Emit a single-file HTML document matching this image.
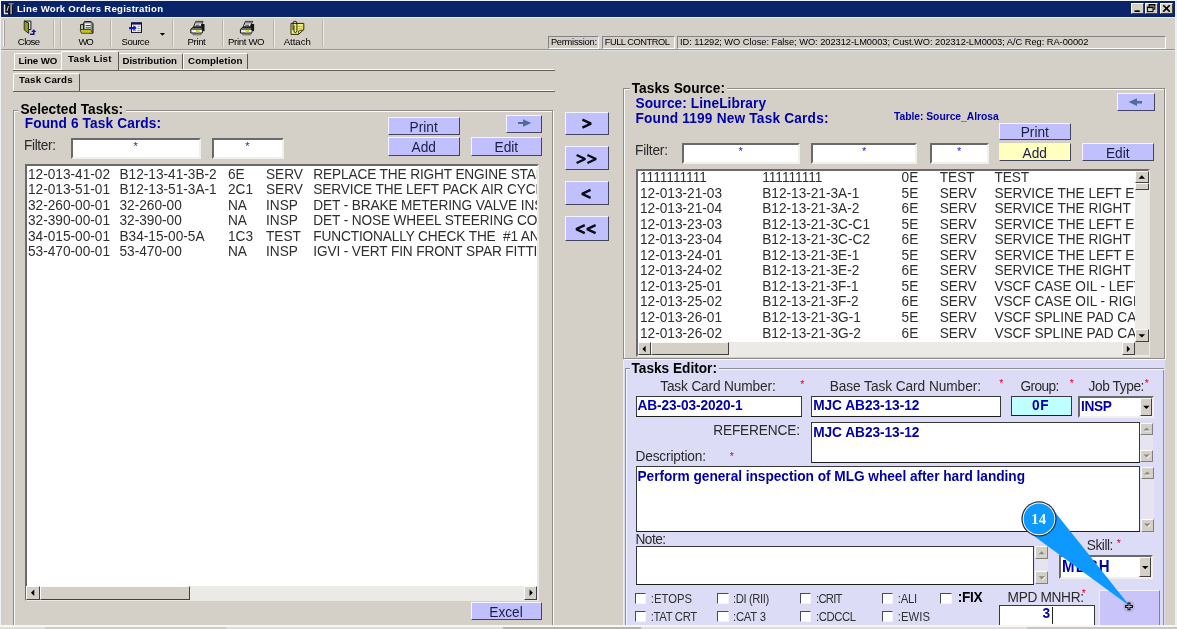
<!DOCTYPE html>
<html>
<head>
<meta charset="utf-8">
<title>Line Work Orders Registration</title>
<style>
html,body{margin:0;padding:0;}
body{width:1177px;height:629px;overflow:hidden;background:#d4d0c8;position:relative;font-family:"Liberation Sans",sans-serif;font-size:13.7px;color:#111;}
div,svg{position:absolute;}
#app{left:0;top:0;width:1177px;height:629px;overflow:hidden;will-change:transform;}
.t{white-space:pre;line-height:1;}
.btn{background:#c0c0ff;box-sizing:border-box;border-style:solid;border-width:1px 1.6px 1.6px 1px;border-color:#f4f4ff #44445e #44445e #f4f4ff;text-align:center;white-space:nowrap;color:#1c1c44;line-height:1;}
.inp{background:#fff;box-sizing:border-box;border:2px solid;border-color:#6a6a6a #f2f0ea #f2f0ea #6a6a6a;}
.inp2{background:#fff;box-sizing:border-box;border:1px solid #383838;border-bottom:1.5px solid #1c1c1c;}
.list{background:#fff;box-sizing:border-box;border:2px solid;border-color:#6a6a6a #ece9e2 #ece9e2 #6a6a6a;overflow:hidden;}
.row{white-space:pre;line-height:1;font-size:13.67px;color:#2e2e2e;transform:scaleY(1.09);transform-origin:0 11px;}
.sb{background:#eceae6;}
.sbtn{background:#d4d0c8;box-sizing:border-box;border:1px solid;border-color:#fbfbfb #404040 #404040 #fbfbfb;}
.sbtn2{background:#d4d0c8;box-sizing:border-box;border:1px solid;border-color:#fbfbfb #808080 #808080 #fbfbfb;}
.sunk{box-sizing:border-box;border:1px solid;border-color:#848284 #fcfcfc #fcfcfc #848284;}
.cb{background:#fff;box-sizing:border-box;border:1.5px solid;border-color:#4a4a56 #f4f4fa #f4f4fa #4a4a56;}
.star{color:#e00030;font-size:10.5px;font-weight:normal;line-height:1;}
.fstar{color:#1c1cb0;font-size:11px;font-weight:normal;line-height:1;}
.vsep{width:1px;background:#b6b3ac;box-shadow:1px 0 0 #eceae5;}
.tab{box-sizing:border-box;background:#d4d0c8;border-style:solid;border-width:1px 1.5px 0 1px;border-color:#fcfcfc #5c5852 #fcfcfc #fcfcfc;border-radius:2px 2px 0 0;}
</style>
</head>
<body>
<div id="app">
<div class="" style="left:0.0px;top:0.0px;width:1177.0px;height:1.0px;background:#eef1f6;"></div>
<div class="" style="left:0.0px;top:0.0px;width:1.0px;height:629.0px;background:#eef1f6;"></div>
<div class="" style="left:1175.0px;top:0.0px;width:2.0px;height:629.0px;background:#ecf0f8;"></div>
<div class="" style="left:1.0px;top:1.0px;width:1174.0px;height:15.7px;background:#0a246a;"></div>
<div class="" style="left:1.0px;top:16.7px;width:1174.0px;height:1.0px;background:#efeeea;"></div>
<svg style="left:2px;top:2px" width="13" height="14" viewBox="0 0 13 14">
<rect x="0.5" y="1" width="10.6" height="11.6" fill="#0b1030"/>
<path d="M2.5 2.5 V11.5 H6" stroke="#e8e8f0" stroke-width="1.4" fill="none"/>
<path d="M6.5 4 L5 9" stroke="#d8d8e8" stroke-width="1" fill="none"/>
<rect x="8.3" y="2.2" width="1.6" height="10" fill="#b8ac78"/>
<rect x="6.5" y="1.2" width="5" height="1.2" fill="#9090a0"/>
</svg>
<div class="" style="left:1131.0px;top:3.0px;width:12.7px;height:11.2px;background:#d4d0c8;box-sizing:border-box;border:1px solid;border-color:#fff #404040 #404040 #fff;"></div>
<div class="" style="left:1145.0px;top:3.0px;width:12.6px;height:11.2px;background:#d4d0c8;box-sizing:border-box;border:1px solid;border-color:#fff #404040 #404040 #fff;"></div>
<div class="" style="left:1160.0px;top:3.0px;width:13.0px;height:11.2px;background:#d4d0c8;box-sizing:border-box;border:1px solid;border-color:#fff #404040 #404040 #fff;"></div>
<svg style="left:1125px;top:0" width="52" height="17" viewBox="0 0 52 17">
<rect x="9.5" y="10.3" width="5.2" height="1.7" fill="#000"/>
<rect x="24.2" y="4.6" width="5.6" height="4.6" fill="none" stroke="#000" stroke-width="1"/><rect x="23.7" y="4.1" width="6.6" height="1.4" fill="#000"/>
<rect x="22.4" y="7.2" width="5.6" height="4.4" fill="#d4d0c8" stroke="#000" stroke-width="1"/><rect x="21.9" y="6.7" width="6.6" height="1.4" fill="#000"/>
<path d="M38.3 5.2 L44.7 11.6 M44.7 5.2 L38.3 11.6" stroke="#000" stroke-width="1.6"/>
</svg>
<div class="" style="left:3.3px;top:19.5px;width:1.0px;height:27.5px;background:#f2f1ed;box-shadow:1px 0 0 #a6a39c;"></div>
<div class="vsep" style="left:53.0px;top:19.5px;width:1.0px;height:27.5px;"></div>
<div class="vsep" style="left:60.0px;top:19.5px;width:1.0px;height:27.5px;"></div>
<div class="vsep" style="left:110.0px;top:19.5px;width:1.0px;height:27.5px;"></div>
<div class="vsep" style="left:172.0px;top:19.5px;width:1.0px;height:27.5px;"></div>
<div class="vsep" style="left:221.6px;top:19.5px;width:1.0px;height:27.5px;"></div>
<div class="vsep" style="left:272.6px;top:19.5px;width:1.0px;height:27.5px;"></div>
<div class="vsep" style="left:322.0px;top:19.5px;width:1.0px;height:27.5px;"></div>
<div class="" style="left:1.0px;top:48.6px;width:1174.0px;height:1.0px;background:#98958f;"></div>
<div class="" style="left:1.0px;top:49.6px;width:1174.0px;height:0.8px;background:#e2e0da;"></div>
<div class="sunk" style="left:547.6px;top:36.2px;width:51.0px;height:12.4px;"></div>
<div class="sunk" style="left:602.0px;top:36.2px;width:73.0px;height:12.4px;"></div>
<div class="sunk" style="left:677.3px;top:36.2px;width:488.3px;height:12.4px;"></div>
<svg style="left:0;top:17px" width="330" height="20" viewBox="0 17 330 20">
<!-- close: door -->
<path d="M24.2 21.1 H30.9 V29.6 H28.6 V23 Z" fill="#fdfdfd" stroke="#111" stroke-width="1" stroke-linejoin="miter"/>
<path d="M24.2 21.2 L28.6 23 V33.4 L24.2 29.8 Z" fill="#8c9a24" stroke="#262a08" stroke-width="0.9"/>
<path d="M30 34.2 H33.8 V31.4" fill="none" stroke="#14148c" stroke-width="1.5"/>
<path d="M31.2 32 L33.8 29.2 L36.4 32 Z" fill="#14148c"/>
<!-- WO: doc + folder -->
<path d="M83.4 29.6 V23.4 L84.4 21.6 H91.2 L93 23.7 V33 H90 Z" fill="#8a8a8a" stroke="#141414" stroke-width="1"/>
<rect x="85" y="23.4" width="5.6" height="5.4" fill="#fcfcfc"/>
<path d="M85.6 25.6 H90.6 M85.6 27.8 H90.6" stroke="#1c1c1c" stroke-width="0.9"/>
<path d="M80.6 29.4 V24.6 H83" fill="none" stroke="#141414" stroke-width="1"/>
<path d="M80.2 29.6 H90.6 L92.8 33.2 H81.4 Z" fill="#dede28" stroke="#2c2c08" stroke-width="0.9"/>
<path d="M81.6 31.4 H91" stroke="#a8a818" stroke-width="1.1" stroke-dasharray="1 0.8"/>
<!-- Source: table w/ arrow -->
<rect x="131.5" y="23" width="10" height="9.4" fill="#fbfbff" stroke="#0c0c2c" stroke-width="1"/>
<rect x="131" y="22.4" width="11" height="2.2" fill="#10104c"/>
<path d="M137.6 26.2 H140.4 M137.6 28.4 H140.4 M137.6 30.4 H140.4 M133.4 26.2 H136 M133.4 30.4 H136" stroke="#55555f" stroke-width="0.9" stroke-dasharray="1.2 0.6"/>
<path d="M129.1 27.1 H133.4 V25.6 L136.9 28.1 L133.4 30.7 V29.2 H129.1 Z" fill="#1212dc"/>
<!-- Print -->
<g id="prn">
<path d="M193.6 26.8 L195.8 21.4 H203 L200.6 26.8 Z" fill="#fdfdfd" stroke="#141414" stroke-width="1"/>
<path d="M195.8 21.6 H202.8 L202 23.5 H195 Z" fill="#7a7a7a"/>
<path d="M195.6 25.2 H199.6" stroke="#222" stroke-width="1"/>
<rect x="201.2" y="24" width="3.3" height="7.2" fill="#141414"/>
<path d="M190.8 33 V29.4 L192.6 27.4 H202.2 V33 Z" fill="#6a6a6a" stroke="#141414" stroke-width="1"/>
<rect x="191.5" y="30.1" width="10.4" height="2.3" fill="#f4f4f4"/>
<rect x="196" y="30.1" width="3.6" height="2.3" fill="#c4e010"/>
<path d="M192.4 33.7 H201.6 L200.8 34.9 H193.2 Z" fill="#b4b4c4" stroke="#3a3a4a" stroke-width="0.6"/>
</g>
<use href="#prn" x="49.6" y="0"/>
<!-- Attach -->
<path d="M291 23.4 H303.8 V29.6 L298.6 34.4 H291 Z" fill="#eeee70" stroke="#2a2a0c" stroke-width="1"/>
<path d="M297.5 26.5 H302.5 M297.5 28.7 H302" stroke="#b8b840" stroke-width="0.9"/>
<path d="M303.6 29.8 L298.6 31 L298.6 34.2" fill="none" stroke="#2a2a0c" stroke-width="0.8"/>
<path d="M293 30 V23 Q293 21.2 294.9 21.2 Q296.9 21.2 296.9 23 V30.6 Q296.9 32.6 295.4 32.6 Q294 32.6 294 30.8 V25.4" fill="none" stroke="#161616" stroke-width="0.9"/>
</svg>
<div class="" style="left:13.0px;top:68.8px;width:541.0px;height:1.0px;background:#f8f8f6;"></div>
<div class="" style="left:13.0px;top:69.8px;width:541.5px;height:1.2px;background:#64605a;"></div>
<div class="" style="left:13.0px;top:90.2px;width:541.0px;height:1.0px;background:#f8f8f6;"></div>
<div class="" style="left:13.0px;top:91.2px;width:541.5px;height:1.2px;background:#64605a;"></div>
<div class="tab" style="left:14.0px;top:53.0px;width:48.0px;height:16.0px;"></div>
<div class="tab" style="left:118.0px;top:53.0px;width:65.0px;height:16.0px;"></div>
<div class="tab" style="left:183.0px;top:53.0px;width:65.0px;height:16.0px;"></div>
<div class="tab" style="left:61.0px;top:51.0px;width:58.0px;height:19.4px;"></div>
<div class="tab" style="left:12.7px;top:72.6px;width:67.5px;height:18.6px;"></div>
<div class="" style="left:13.7px;top:111.0px;width:540.2px;height:550.0px;box-sizing:border-box;border:1px solid #fbfbfb;"></div><div class="" style="left:12.7px;top:110.0px;width:540.2px;height:550.0px;box-sizing:border-box;border:1px solid #8e8c88;"></div>
<div class="" style="left:18.0px;top:104.0px;width:107.5px;height:12.0px;background:#d4d0c8;"></div>
<div class="inp" style="left:71.4px;top:137.8px;width:129.6px;height:20.9px;"></div>
<div class="inp" style="left:212.0px;top:137.8px;width:72.0px;height:20.9px;"></div>
<div class="btn" style="left:388.0px;top:116.9px;width:72.0px;height:17.9px;"></div>
<div class="btn" style="left:388.0px;top:137.0px;width:72.0px;height:18.5px;"></div>
<div class="btn" style="left:470.8px;top:137.0px;width:71.5px;height:18.5px;"></div>
<div class="btn" style="left:505.9px;top:115.2px;width:36.1px;height:18.2px;"></div>
<div class="list" style="left:24.5px;top:164.3px;width:514.0px;height:437.2px;"><div class="row" style="left:1.5px;top:1.7px;">12-013-41-02</div><div class="row" style="left:93.0px;top:1.7px;">B12-13-41-3B-2</div><div class="row" style="left:201.5px;top:1.7px;">6E</div><div class="row" style="left:239.5px;top:1.7px;">SERV</div><div class="row" style="left:286.8px;top:1.7px;letter-spacing:-0.13px;">REPLACE THE RIGHT ENGINE STARTER</div><div class="row" style="left:1.5px;top:16.7px;">12-013-51-01</div><div class="row" style="left:93.0px;top:16.7px;">B12-13-51-3A-1</div><div class="row" style="left:201.5px;top:16.7px;">2C1</div><div class="row" style="left:239.5px;top:16.7px;">SERV</div><div class="row" style="left:286.8px;top:16.7px;letter-spacing:-0.13px;">SERVICE THE LEFT PACK AIR CYCLE</div><div class="row" style="left:1.5px;top:32.7px;">32-260-00-01</div><div class="row" style="left:93.0px;top:32.7px;">32-260-00</div><div class="row" style="left:201.5px;top:32.7px;">NA</div><div class="row" style="left:239.5px;top:32.7px;">INSP</div><div class="row" style="left:286.8px;top:32.7px;letter-spacing:-0.13px;">DET - BRAKE METERING VALVE INSP</div><div class="row" style="left:1.5px;top:47.7px;">32-390-00-01</div><div class="row" style="left:93.0px;top:47.7px;">32-390-00</div><div class="row" style="left:201.5px;top:47.7px;">NA</div><div class="row" style="left:239.5px;top:47.7px;">INSP</div><div class="row" style="left:286.8px;top:47.7px;letter-spacing:-0.13px;">DET - NOSE WHEEL STEERING COLLAR</div><div class="row" style="left:1.5px;top:63.7px;">34-015-00-01</div><div class="row" style="left:93.0px;top:63.7px;">B34-15-00-5A</div><div class="row" style="left:201.5px;top:63.7px;">1C3</div><div class="row" style="left:239.5px;top:63.7px;">TEST</div><div class="row" style="left:286.8px;top:63.7px;letter-spacing:-0.13px;">FUNCTIONALLY CHECK THE  #1 AND</div><div class="row" style="left:1.5px;top:78.7px;">53-470-00-01</div><div class="row" style="left:93.0px;top:78.7px;">53-470-00</div><div class="row" style="left:201.5px;top:78.7px;">NA</div><div class="row" style="left:239.5px;top:78.7px;">INSP</div><div class="row" style="left:286.8px;top:78.7px;letter-spacing:-0.13px;">IGVI - VERT FIN FRONT SPAR FITTING</div><div class="sb" style="left:0.0px;top:419.9px;width:510.0px;height:14.3px;"></div></div>
<div class="sbtn" style="left:26.3px;top:586.0px;width:13.3px;height:13.6px;"></div>
<div class="sbtn" style="left:39.6px;top:586.0px;width:150.1px;height:13.6px;"></div>
<div class="sbtn" style="left:524.2px;top:586.0px;width:13.2px;height:13.6px;"></div>
<div class="btn" style="left:470.8px;top:602.0px;width:71.1px;height:18.2px;"></div>
<div class="fstar" style="left:133.5px;top:140.5px">*</div>
<div class="fstar" style="left:245.3px;top:140.5px">*</div>
<div class="btn" style="left:565.3px;top:111.8px;width:43.5px;height:23.0px;"></div>
<div class="btn" style="left:565.3px;top:146.3px;width:43.5px;height:23.7px;"></div>
<div class="btn" style="left:565.3px;top:181.3px;width:43.5px;height:23.7px;"></div>
<div class="btn" style="left:565.3px;top:216.4px;width:43.5px;height:24.4px;"></div>
<svg style="left:0;top:0" width="1177" height="629"><path d="M582.4 119.6 L591.0 123.6 L582.4 127.6 M576.6 155.0 L585.2 159.0 L576.6 163.0 M587.4 155.0 L596.0 159.0 L587.4 163.0 M590.6 189.8 L582.0 193.8 L590.6 197.8 M584.8 225.2 L576.2 229.2 L584.8 233.2 M595.6 225.2 L587.0 229.2 L595.6 233.2" fill="none" stroke="#0c0c14" stroke-width="2.4" stroke-linejoin="bevel"/></svg>
<div class="" style="left:624.3px;top:89.3px;width:541.5px;height:270.7px;box-sizing:border-box;border:1px solid #fbfbfb;"></div><div class="" style="left:623.3px;top:88.3px;width:541.5px;height:270.7px;box-sizing:border-box;border:1px solid #8e8c88;"></div>
<div class="" style="left:629.5px;top:82.0px;width:97.5px;height:13.0px;background:#d4d0c8;"></div>
<div class="inp" style="left:682.0px;top:143.0px;width:118.0px;height:21.2px;"></div>
<div class="inp" style="left:811.4px;top:143.0px;width:106.0px;height:21.2px;"></div>
<div class="inp" style="left:929.6px;top:143.0px;width:59.7px;height:21.2px;"></div>
<div class="fstar" style="left:738.5px;top:145.8px">*</div>
<div class="fstar" style="left:861.9px;top:145.8px">*</div>
<div class="fstar" style="left:957.0px;top:145.8px">*</div>
<div class="btn" style="left:1117.3px;top:93.3px;width:37.7px;height:18.2px;"></div>
<div class="btn" style="left:999.0px;top:122.5px;width:72.2px;height:17.3px;"></div>
<div class="btn" style="left:999.0px;top:142.9px;width:72.2px;height:17.8px;background:#ffffc0;"></div>
<div class="btn" style="left:1082.0px;top:142.9px;width:72.0px;height:17.8px;"></div>
<div class="list" style="left:636.0px;top:169.3px;width:513.5px;height:187.3px;"><div class="" style="left:0.0px;top:0.0px;width:497.0px;height:171.1px;overflow:hidden;"><div class="row" style="left:2.0px;top:-0.3px;">1111111111</div><div class="row" style="left:124.2px;top:-0.3px;">111111111</div><div class="row" style="left:263.6px;top:-0.3px;">0E</div><div class="row" style="left:301.7px;top:-0.3px;">TEST</div><div class="row" style="left:356.4px;top:-0.3px;letter-spacing:-0.03px;">TEST</div><div class="row" style="left:2.0px;top:15.7px;">12-013-21-03</div><div class="row" style="left:124.2px;top:15.7px;">B12-13-21-3A-1</div><div class="row" style="left:263.6px;top:15.7px;">5E</div><div class="row" style="left:301.7px;top:15.7px;">SERV</div><div class="row" style="left:356.4px;top:15.7px;letter-spacing:-0.03px;">SERVICE THE LEFT ENGINE</div><div class="row" style="left:2.0px;top:30.7px;">12-013-21-04</div><div class="row" style="left:124.2px;top:30.7px;">B12-13-21-3A-2</div><div class="row" style="left:263.6px;top:30.7px;">6E</div><div class="row" style="left:301.7px;top:30.7px;">SERV</div><div class="row" style="left:356.4px;top:30.7px;letter-spacing:-0.03px;">SERVICE THE RIGHT ENGINE</div><div class="row" style="left:2.0px;top:46.7px;">12-013-23-03</div><div class="row" style="left:124.2px;top:46.7px;">B12-13-21-3C-C1</div><div class="row" style="left:263.6px;top:46.7px;">5E</div><div class="row" style="left:301.7px;top:46.7px;">SERV</div><div class="row" style="left:356.4px;top:46.7px;letter-spacing:-0.03px;">SERVICE THE LEFT ENGINE</div><div class="row" style="left:2.0px;top:61.7px;">12-013-23-04</div><div class="row" style="left:124.2px;top:61.7px;">B12-13-21-3C-C2</div><div class="row" style="left:263.6px;top:61.7px;">6E</div><div class="row" style="left:301.7px;top:61.7px;">SERV</div><div class="row" style="left:356.4px;top:61.7px;letter-spacing:-0.03px;">SERVICE THE RIGHT ENGINE</div><div class="row" style="left:2.0px;top:77.7px;">12-013-24-01</div><div class="row" style="left:124.2px;top:77.7px;">B12-13-21-3E-1</div><div class="row" style="left:263.6px;top:77.7px;">5E</div><div class="row" style="left:301.7px;top:77.7px;">SERV</div><div class="row" style="left:356.4px;top:77.7px;letter-spacing:-0.03px;">SERVICE THE LEFT ENGINE</div><div class="row" style="left:2.0px;top:92.7px;">12-013-24-02</div><div class="row" style="left:124.2px;top:92.7px;">B12-13-21-3E-2</div><div class="row" style="left:263.6px;top:92.7px;">6E</div><div class="row" style="left:301.7px;top:92.7px;">SERV</div><div class="row" style="left:356.4px;top:92.7px;letter-spacing:-0.03px;">SERVICE THE RIGHT ENGINE</div><div class="row" style="left:2.0px;top:108.7px;">12-013-25-01</div><div class="row" style="left:124.2px;top:108.7px;">B12-13-21-3F-1</div><div class="row" style="left:263.6px;top:108.7px;">5E</div><div class="row" style="left:301.7px;top:108.7px;">SERV</div><div class="row" style="left:356.4px;top:108.7px;letter-spacing:-0.03px;">VSCF CASE OIL - LEFT</div><div class="row" style="left:2.0px;top:123.7px;">12-013-25-02</div><div class="row" style="left:124.2px;top:123.7px;">B12-13-21-3F-2</div><div class="row" style="left:263.6px;top:123.7px;">6E</div><div class="row" style="left:301.7px;top:123.7px;">SERV</div><div class="row" style="left:356.4px;top:123.7px;letter-spacing:-0.03px;">VSCF CASE OIL - RIGHT</div><div class="row" style="left:2.0px;top:139.7px;">12-013-26-01</div><div class="row" style="left:124.2px;top:139.7px;">B12-13-21-3G-1</div><div class="row" style="left:263.6px;top:139.7px;">5E</div><div class="row" style="left:301.7px;top:139.7px;">SERV</div><div class="row" style="left:356.4px;top:139.7px;letter-spacing:-0.03px;">VSCF SPLINE PAD CAP</div><div class="row" style="left:2.0px;top:155.7px;">12-013-26-02</div><div class="row" style="left:124.2px;top:155.7px;">B12-13-21-3G-2</div><div class="row" style="left:263.6px;top:155.7px;">6E</div><div class="row" style="left:301.7px;top:155.7px;">SERV</div><div class="row" style="left:356.4px;top:155.7px;letter-spacing:-0.03px;">VSCF SPLINE PAD CAP</div></div><div class="sb" style="left:497.0px;top:0.0px;width:14.5px;height:184.7px;"></div><div class="sb" style="left:0.0px;top:171.1px;width:511.5px;height:13.6px;"></div></div>
<div class="sbtn" style="left:1135.0px;top:170.6px;width:13.6px;height:12.8px;"></div>
<div class="sbtn" style="left:1135.0px;top:183.4px;width:13.6px;height:7.0px;"></div>
<div class="sbtn" style="left:1135.0px;top:329.0px;width:13.6px;height:13.4px;"></div>
<div class="sbtn" style="left:637.5px;top:342.4px;width:13.5px;height:13.0px;"></div>
<div class="sbtn" style="left:651.0px;top:342.4px;width:78.3px;height:13.0px;"></div>
<div class="sbtn" style="left:1121.5px;top:342.4px;width:13.5px;height:13.0px;"></div>
<div class="" style="left:1135.0px;top:342.4px;width:13.6px;height:13.0px;background:#d4d0c8;"></div>
<div class="" style="left:624.0px;top:360.0px;width:541.4px;height:265.2px;background:#dddcf7;"></div>
<div class="" style="left:623.3px;top:360.0px;width:0.9px;height:265.2px;background:#ececf6;"></div>
<div class="" style="left:624.6px;top:367.6px;width:539.0px;height:272.4px;box-sizing:border-box;border:1px solid #8e8c98;"></div>
<div class="" style="left:625.6px;top:368.6px;width:539.0px;height:271.4px;box-sizing:border-box;border:1px solid #f6f6ff;border-right:none;"></div>
<div class="" style="left:629.5px;top:362.0px;width:89.5px;height:14.0px;background:#dddcf7;"></div>
<div class="inp2" style="left:635.5px;top:396.0px;width:166.2px;height:20.6px;"></div>
<div class="inp2" style="left:811.4px;top:396.0px;width:189.4px;height:20.6px;"></div>
<div class="inp2" style="left:1011.0px;top:395.8px;width:61.0px;height:20.6px;background:#c0ffff;"></div>
<div class="inp" style="left:1077.8px;top:396.0px;width:75.8px;height:21.6px;"></div>
<div class="sbtn" style="left:1140.4px;top:398.0px;width:12.0px;height:18.2px;"></div>
<div class="inp2" style="left:811.4px;top:422.4px;width:328.2px;height:40.4px;"></div>
<div class="" style="left:1140.4px;top:422.6px;width:12.4px;height:39.8px;background:#e6e4ee;"></div><div class="sbtn2" style="left:1140.4px;top:422.6px;width:12.4px;height:12.8px;"></div><div class="sbtn2" style="left:1140.4px;top:449.6px;width:12.4px;height:12.8px;"></div>
<div class="inp2" style="left:635.5px;top:466.4px;width:504.5px;height:65.6px;"></div>
<div class="" style="left:1140.8px;top:466.6px;width:12.8px;height:65.0px;background:#e6e4ee;"></div><div class="sbtn2" style="left:1140.8px;top:466.6px;width:12.8px;height:12.8px;"></div><div class="sbtn2" style="left:1140.8px;top:518.8px;width:12.8px;height:12.8px;"></div>
<div class="inp2" style="left:635.5px;top:546.2px;width:398.9px;height:38.4px;"></div>
<div class="" style="left:1035.2px;top:546.4px;width:13.0px;height:37.8px;background:#e6e4ee;"></div><div class="sbtn2" style="left:1035.2px;top:546.4px;width:13.0px;height:12.8px;"></div><div class="sbtn2" style="left:1035.2px;top:571.4px;width:13.0px;height:12.8px;"></div>
<div class="inp" style="left:1059.0px;top:555.0px;width:93.8px;height:24.2px;"></div>
<div class="sbtn" style="left:1139.4px;top:557.0px;width:11.6px;height:20.2px;"></div>
<div class="inp2" style="left:999.0px;top:604.7px;width:96.0px;height:25.3px;"></div>
<div class="" style="left:1051.5px;top:606.5px;width:0.9px;height:17.5px;background:#202020;"></div>
<div class="" style="left:1099.1px;top:590.4px;width:60.7px;height:35.6px;background:#c9c5fa;box-sizing:border-box;border-left:1.2px solid #f2f2ff;border-top:1.2px solid #f2f2ff;border-right:1.6px solid #7e7ea6;"></div>
<div class="cb" style="left:635.2px;top:592.8px;width:11.3px;height:11.0px;"></div>
<div class="cb" style="left:635.2px;top:611.2px;width:11.3px;height:10.8px;"></div>
<div class="cb" style="left:717.4px;top:592.8px;width:11.3px;height:11.0px;"></div>
<div class="cb" style="left:717.4px;top:611.2px;width:11.3px;height:10.8px;"></div>
<div class="cb" style="left:799.8px;top:592.8px;width:11.3px;height:11.0px;"></div>
<div class="cb" style="left:799.8px;top:611.2px;width:11.3px;height:10.8px;"></div>
<div class="cb" style="left:882.0px;top:592.8px;width:11.3px;height:11.0px;"></div>
<div class="cb" style="left:882.0px;top:611.2px;width:11.3px;height:10.8px;"></div>
<div class="cb" style="left:940.4px;top:592.8px;width:11.3px;height:11.0px;"></div>
<div class="star" style="left:800.3px;top:379.0px">*</div>
<div class="star" style="left:999.3px;top:378.0px">*</div>
<div class="star" style="left:1069.8px;top:378.0px">*</div>
<div class="star" style="left:1144.8px;top:378.0px">*</div>
<div class="star" style="left:729.8px;top:450.5px">*</div>
<div class="star" style="left:1116.8px;top:538.0px">*</div>
<div class="star" style="left:1081.8px;top:587.5px">*</div>
<div class="" style="left:0.0px;top:625.2px;width:1177.0px;height:1.4px;background:#f6f6f4;"></div>
<div class="" style="left:0.0px;top:626.6px;width:1177.0px;height:2.4px;background:#e0ded8;"></div>
<div class="" style="left:45.0px;top:626.8px;width:181.0px;height:2.2px;background:#d0cdc6;"></div>
<div class="" style="left:503.0px;top:626.8px;width:138.0px;height:2.2px;background:#b6b3ac;"></div>
<div class="" style="left:1027.0px;top:626.8px;width:150.0px;height:2.2px;background:#cac7c0;"></div>
<svg style="left:0;top:0" width="1177" height="629">
<path d="M518 121.9 H523 V119.2 L531.3 122.9 L523 126.7 V123.9 H518 Z" fill="#4c6c9c"/>
<path d="M1142 101 H1137 V98.3 L1128.6 102.1 L1137 105.9 V103.4 H1142 Z" fill="#4c6c9c"/>
</svg>
<svg style="left:0;top:0" width="1177" height="629"><polygon points="159.9,33.1 165.1,33.1 162.5,35.699999999999996" fill="#000"/><polygon points="34.25,589.5 34.25,596.0999999999999 30.950000000000003,592.8" fill="#000"/><polygon points="529.5500000000001,589.5 529.5500000000001,596.0999999999999 532.85,592.8" fill="#000"/><polygon points="1138.5,178.65 1145.1,178.65 1141.8,175.35" fill="#000"/><polygon points="1138.5,334.15000000000003 1145.1,334.15000000000003 1141.8,337.45" fill="#000"/><polygon points="645.65,345.7 645.65,352.3 642.35,349" fill="#000"/><polygon points="1126.85,345.7 1126.85,352.3 1130.15,349" fill="#000"/><polygon points="1143.2,405.79999999999995 1149.6000000000001,405.79999999999995 1146.4,409.0" fill="#000"/><polygon points="1144.1999999999998,431.40000000000003 1150.6,431.40000000000003 1147.3999999999999,428.2" fill="#f8f8f8"/><polygon points="1143.3999999999999,430.6 1149.8,430.6 1146.6,427.4" fill="#8a8884"/><polygon points="1144.1999999999998,455.2 1150.6,455.2 1147.3999999999999,458.40000000000003" fill="#f8f8f8"/><polygon points="1143.3999999999999,454.4 1149.8,454.4 1146.6,457.6" fill="#8a8884"/><polygon points="1144.7999999999997,475.40000000000003 1151.1999999999998,475.40000000000003 1147.9999999999998,472.2" fill="#f8f8f8"/><polygon points="1143.9999999999998,474.6 1150.3999999999999,474.6 1147.1999999999998,471.4" fill="#8a8884"/><polygon points="1144.7999999999997,524.4 1151.1999999999998,524.4 1147.9999999999998,527.6" fill="#f8f8f8"/><polygon points="1143.9999999999998,523.6 1150.3999999999999,523.6 1147.1999999999998,526.8000000000001" fill="#8a8884"/><polygon points="1039.3,555.1999999999999 1045.7,555.1999999999999 1042.5,551.9999999999999" fill="#f8f8f8"/><polygon points="1038.5,554.4 1044.9,554.4 1041.7,551.1999999999999" fill="#8a8884"/><polygon points="1039.3,577.0 1045.7,577.0 1042.5,580.2" fill="#f8f8f8"/><polygon points="1038.5,576.2 1044.9,576.2 1041.7,579.4000000000001" fill="#8a8884"/><polygon points="1142.0,566.0 1148.4,566.0 1145.2,569.2" fill="#000"/></svg>
<!-- texts -->
<div class="t" style="left:17.0px;top:4.0px;font-size:9.6px;font-weight:bold;color:#fff;letter-spacing:0.251px;">Line Work Orders Registration</div>
<div class="t" style="left:17.8px;top:37.0px;font-size:9.6px;font-weight:normal;color:#000;letter-spacing:-0.558px;">Close</div>
<div class="t" style="left:78.5px;top:37.0px;font-size:9.6px;font-weight:normal;color:#000;letter-spacing:-1.200px;">WO</div>
<div class="t" style="left:121.5px;top:37.0px;font-size:9.6px;font-weight:normal;color:#000;letter-spacing:-0.481px;">Source</div>
<div class="t" style="left:187.6px;top:37.0px;font-size:9.6px;font-weight:normal;color:#000;letter-spacing:-0.384px;">Print</div>
<div class="t" style="left:228.0px;top:37.0px;font-size:9.6px;font-weight:normal;color:#000;letter-spacing:-0.332px;">Print WO</div>
<div class="t" style="left:283.7px;top:37.0px;font-size:9.6px;font-weight:normal;color:#000;letter-spacing:-0.021px;">Attach</div>
<div class="t" style="left:550.9px;top:38.0px;font-size:9.3px;font-weight:normal;color:#000;letter-spacing:-0.248px;">Permission:</div>
<div class="t" style="left:604.7px;top:38.0px;font-size:9.3px;font-weight:normal;color:#000;letter-spacing:-0.467px;">FULL CONTROL</div>
<div class="t" style="left:680.0px;top:38.0px;font-size:9.3px;font-weight:normal;color:#000;letter-spacing:-0.038px;">ID: 11292; WO Close: False; WO: 202312-LM0003; Cust.WO: 202312-LM0003; A/C Reg: RA-00002</div>
<div class="t" style="left:18.5px;top:56.0px;font-size:9.7px;font-weight:bold;color:#000;letter-spacing:-0.083px;">Line WO</div>
<div class="t" style="left:68.0px;top:54.0px;font-size:9.7px;font-weight:bold;color:#000;letter-spacing:0.277px;">Task List</div>
<div class="t" style="left:122.4px;top:56.0px;font-size:9.7px;font-weight:bold;color:#000;letter-spacing:0.022px;">Distribution</div>
<div class="t" style="left:188.0px;top:56.0px;font-size:9.7px;font-weight:bold;color:#000;letter-spacing:0.135px;">Completion</div>
<div class="t" style="left:19.1px;top:75.0px;font-size:9.7px;font-weight:bold;color:#000;letter-spacing:0.220px;">Task Cards</div>
<div class="t" style="left:20.4px;top:103.0px;font-size:13.7px;font-weight:bold;color:#000;letter-spacing:0.017px;transform:scaleY(1.09);transform-origin:0 11px;">Selected Tasks:</div>
<div class="t" style="left:24.7px;top:117.0px;font-size:13.7px;font-weight:bold;color:#0000a8;letter-spacing:0.113px;transform:scaleY(1.09);transform-origin:0 11px;">Found 6 Task Cards:</div>
<div class="t" style="left:24.0px;top:139.0px;font-size:13.7px;font-weight:normal;color:#2a2a2a;letter-spacing:-0.370px;transform:scaleY(1.09);transform-origin:0 11px;">Filter:</div>
<div class="t" style="left:631.7px;top:82.0px;font-size:13.7px;font-weight:bold;color:#000;letter-spacing:0.061px;transform:scaleY(1.09);transform-origin:0 11px;">Tasks Source:</div>
<div class="t" style="left:635.5px;top:97.0px;font-size:13.7px;font-weight:bold;color:#0000a8;letter-spacing:0.066px;transform:scaleY(1.09);transform-origin:0 11px;">Source: LineLibrary</div>
<div class="t" style="left:635.5px;top:112.0px;font-size:13.7px;font-weight:bold;color:#0000a8;letter-spacing:0.184px;transform:scaleY(1.09);transform-origin:0 11px;">Found 1199 New Task Cards:</div>
<div class="t" style="left:635.0px;top:144.0px;font-size:13.7px;font-weight:normal;color:#2a2a2a;letter-spacing:-0.203px;transform:scaleY(1.09);transform-origin:0 11px;">Filter:</div>
<div class="t" style="left:894.0px;top:112.0px;font-size:10.3px;font-weight:bold;color:#0000a8;letter-spacing:-0.022px;">Table: Source_Alrosa</div>
<div class="t" style="left:631.5px;top:362.0px;font-size:13.7px;font-weight:bold;color:#000;letter-spacing:-0.017px;transform:scaleY(1.09);transform-origin:0 11px;">Tasks Editor:</div>
<div class="t" style="left:660.2px;top:380.0px;font-size:13.7px;font-weight:normal;color:#2a2a2a;letter-spacing:-0.150px;transform:scaleY(1.09);transform-origin:0 11px;">Task Card Number:</div>
<div class="t" style="left:829.7px;top:380.0px;font-size:13.7px;font-weight:normal;color:#2a2a2a;letter-spacing:-0.065px;transform:scaleY(1.09);transform-origin:0 11px;">Base Task Card Number:</div>
<div class="t" style="left:1020.6px;top:380.0px;font-size:13.7px;font-weight:normal;color:#2a2a2a;letter-spacing:-0.632px;transform:scaleY(1.09);transform-origin:0 11px;">Group:</div>
<div class="t" style="left:1088.5px;top:380.0px;font-size:13.7px;font-weight:normal;color:#2a2a2a;letter-spacing:-0.401px;transform:scaleY(1.09);transform-origin:0 11px;">Job Type:</div>
<div class="t" style="left:713.2px;top:424.0px;font-size:13.7px;font-weight:normal;color:#2a2a2a;letter-spacing:-0.159px;transform:scaleY(1.09);transform-origin:0 11px;">REFERENCE:</div>
<div class="t" style="left:635.5px;top:450.0px;font-size:13.7px;font-weight:normal;color:#2a2a2a;letter-spacing:-0.162px;transform:scaleY(1.09);transform-origin:0 11px;">Description:</div>
<div class="t" style="left:635.5px;top:533.0px;font-size:13.7px;font-weight:normal;color:#2a2a2a;letter-spacing:-0.555px;transform:scaleY(1.09);transform-origin:0 11px;">Note:</div>
<div class="t" style="left:1086.7px;top:539.0px;font-size:13.7px;font-weight:normal;color:#2a2a2a;letter-spacing:-0.441px;transform:scaleY(1.09);transform-origin:0 11px;">Skill:</div>
<div class="t" style="left:1007.6px;top:591.0px;font-size:13.7px;font-weight:normal;color:#2a2a2a;letter-spacing:-0.335px;transform:scaleY(1.09);transform-origin:0 11px;">MPD MNHR:</div>
<div class="t" style="left:637.5px;top:399.0px;font-size:13.7px;font-weight:bold;color:#0000a8;letter-spacing:-0.108px;transform:scaleY(1.09);transform-origin:0 11px;">AB-23-03-2020-1</div>
<div class="t" style="left:813.2px;top:399.0px;font-size:13.7px;font-weight:bold;color:#0000a8;letter-spacing:-0.044px;transform:scaleY(1.09);transform-origin:0 11px;">MJC AB23-13-12</div>
<div class="t" style="left:813.2px;top:426.0px;font-size:13.7px;font-weight:bold;color:#0000a8;letter-spacing:-0.044px;transform:scaleY(1.09);transform-origin:0 11px;">MJC AB23-13-12</div>
<div class="t" style="left:1032.0px;top:399.0px;font-size:13.7px;font-weight:bold;color:#0000a8;letter-spacing:0.516px;transform:scaleY(1.09);transform-origin:0 11px;">0F</div>
<div class="t" style="left:1080.9px;top:400.0px;font-size:13.7px;font-weight:bold;color:#0000a8;letter-spacing:-0.318px;transform:scaleY(1.09);transform-origin:0 11px;">INSP</div>
<div class="t" style="left:637.5px;top:470.0px;font-size:13.7px;font-weight:bold;color:#0000a8;letter-spacing:-0.033px;transform:scaleY(1.09);transform-origin:0 11px;">Perform general inspection of MLG wheel after hard landing</div>
<div class="t" style="left:1062.0px;top:559.0px;font-size:15px;font-weight:bold;color:#0000a8;letter-spacing:1.176px;transform:scaleY(1.09);transform-origin:0 13px;">MECH</div>
<div class="t" style="left:1042.5px;top:607.0px;font-size:13.7px;font-weight:bold;color:#0000a8;letter-spacing:0.000px;transform:scaleY(1.09);transform-origin:0 11px;">3</div>
<div class="t" style="left:650.8px;top:594.0px;font-size:11.3px;font-weight:normal;color:#303030;letter-spacing:0.013px;transform:scaleY(1.09);transform-origin:0 9px;">:ETOPS</div>
<div class="t" style="left:650.8px;top:612.0px;font-size:11.3px;font-weight:normal;color:#303030;letter-spacing:-0.336px;transform:scaleY(1.09);transform-origin:0 9px;">:TAT CRT</div>
<div class="t" style="left:733.0px;top:594.0px;font-size:11.3px;font-weight:normal;color:#303030;letter-spacing:-0.406px;transform:scaleY(1.09);transform-origin:0 9px;">:DI (RII)</div>
<div class="t" style="left:733.0px;top:612.0px;font-size:11.3px;font-weight:normal;color:#303030;letter-spacing:-0.225px;transform:scaleY(1.09);transform-origin:0 9px;">:CAT 3</div>
<div class="t" style="left:816.0px;top:594.0px;font-size:11.3px;font-weight:normal;color:#303030;letter-spacing:-0.750px;transform:scaleY(1.09);transform-origin:0 9px;">:CRIT</div>
<div class="t" style="left:816.0px;top:612.0px;font-size:11.3px;font-weight:normal;color:#303030;letter-spacing:-0.412px;transform:scaleY(1.09);transform-origin:0 9px;">:CDCCL</div>
<div class="t" style="left:897.8px;top:594.0px;font-size:11.3px;font-weight:normal;color:#303030;letter-spacing:-0.236px;transform:scaleY(1.09);transform-origin:0 9px;">:ALI</div>
<div class="t" style="left:897.8px;top:612.0px;font-size:11.3px;font-weight:normal;color:#303030;letter-spacing:0.046px;transform:scaleY(1.09);transform-origin:0 9px;">:EWIS</div>
<div class="t" style="left:957.7px;top:591.0px;font-size:13.7px;font-weight:bold;color:#000;letter-spacing:-0.320px;transform:scaleY(1.09);transform-origin:0 11px;">:FIX</div>
<div class="t" style="left:409.6px;top:121.0px;font-size:13.7px;font-weight:normal;color:#1c1c48;letter-spacing:0.000px;transform:scaleY(1.09);transform-origin:0 11px;">Print</div>
<div class="t" style="left:411.5px;top:141.0px;font-size:13.7px;font-weight:normal;color:#1c1c48;letter-spacing:0.000px;transform:scaleY(1.09);transform-origin:0 11px;">Add</div>
<div class="t" style="left:494.5px;top:141.0px;font-size:13.7px;font-weight:normal;color:#1c1c48;letter-spacing:0.000px;transform:scaleY(1.09);transform-origin:0 11px;">Edit</div>
<div class="t" style="left:489.3px;top:606.0px;font-size:13.7px;font-weight:normal;color:#1c1c48;letter-spacing:0.000px;transform:scaleY(1.09);transform-origin:0 11px;">Excel</div>
<div class="t" style="left:1020.7px;top:126.0px;font-size:13.7px;font-weight:normal;color:#1c1c48;letter-spacing:0.000px;transform:scaleY(1.09);transform-origin:0 11px;">Print</div>
<div class="t" style="left:1022.6px;top:147.0px;font-size:13.7px;font-weight:normal;color:#1c1c48;letter-spacing:0.000px;transform:scaleY(1.09);transform-origin:0 11px;">Add</div>
<div class="t" style="left:1105.9px;top:147.0px;font-size:13.7px;font-weight:normal;color:#1c1c48;letter-spacing:0.000px;transform:scaleY(1.09);transform-origin:0 11px;">Edit</div>
<!-- callout -->
<svg style="left:0;top:0" width="1177" height="629">
<polygon points="1029.1,532.5 1130,606.2 1052.1,508.4" fill="#0d99ff"/>
<circle cx="1039" cy="518.9" r="17.6" fill="#2c3036"/>
<circle cx="1039" cy="518.9" r="16.3" fill="#ffffff"/>
<circle cx="1039" cy="518.9" r="15.4" fill="#0d99ff"/>
<text x="1038.8" y="523.8" text-anchor="middle" font-family="Liberation Serif, serif" font-weight="bold" font-size="14.6" letter-spacing="0.2" fill="#ffffff">14</text>
<g>
<circle cx="1129" cy="606.4" r="6" fill="#8c8c9c" opacity="0.28"/>
<path d="M1129 602.6 V610.2 M1125 606.5 H1133" stroke="#141414" stroke-width="3"/>
<path d="M1129 603.8 V609 M1126.2 606.5 H1131.8" stroke="#d0ccf4" stroke-width="0.9"/>
</g>
</svg>
</div>
</body>
</html>
